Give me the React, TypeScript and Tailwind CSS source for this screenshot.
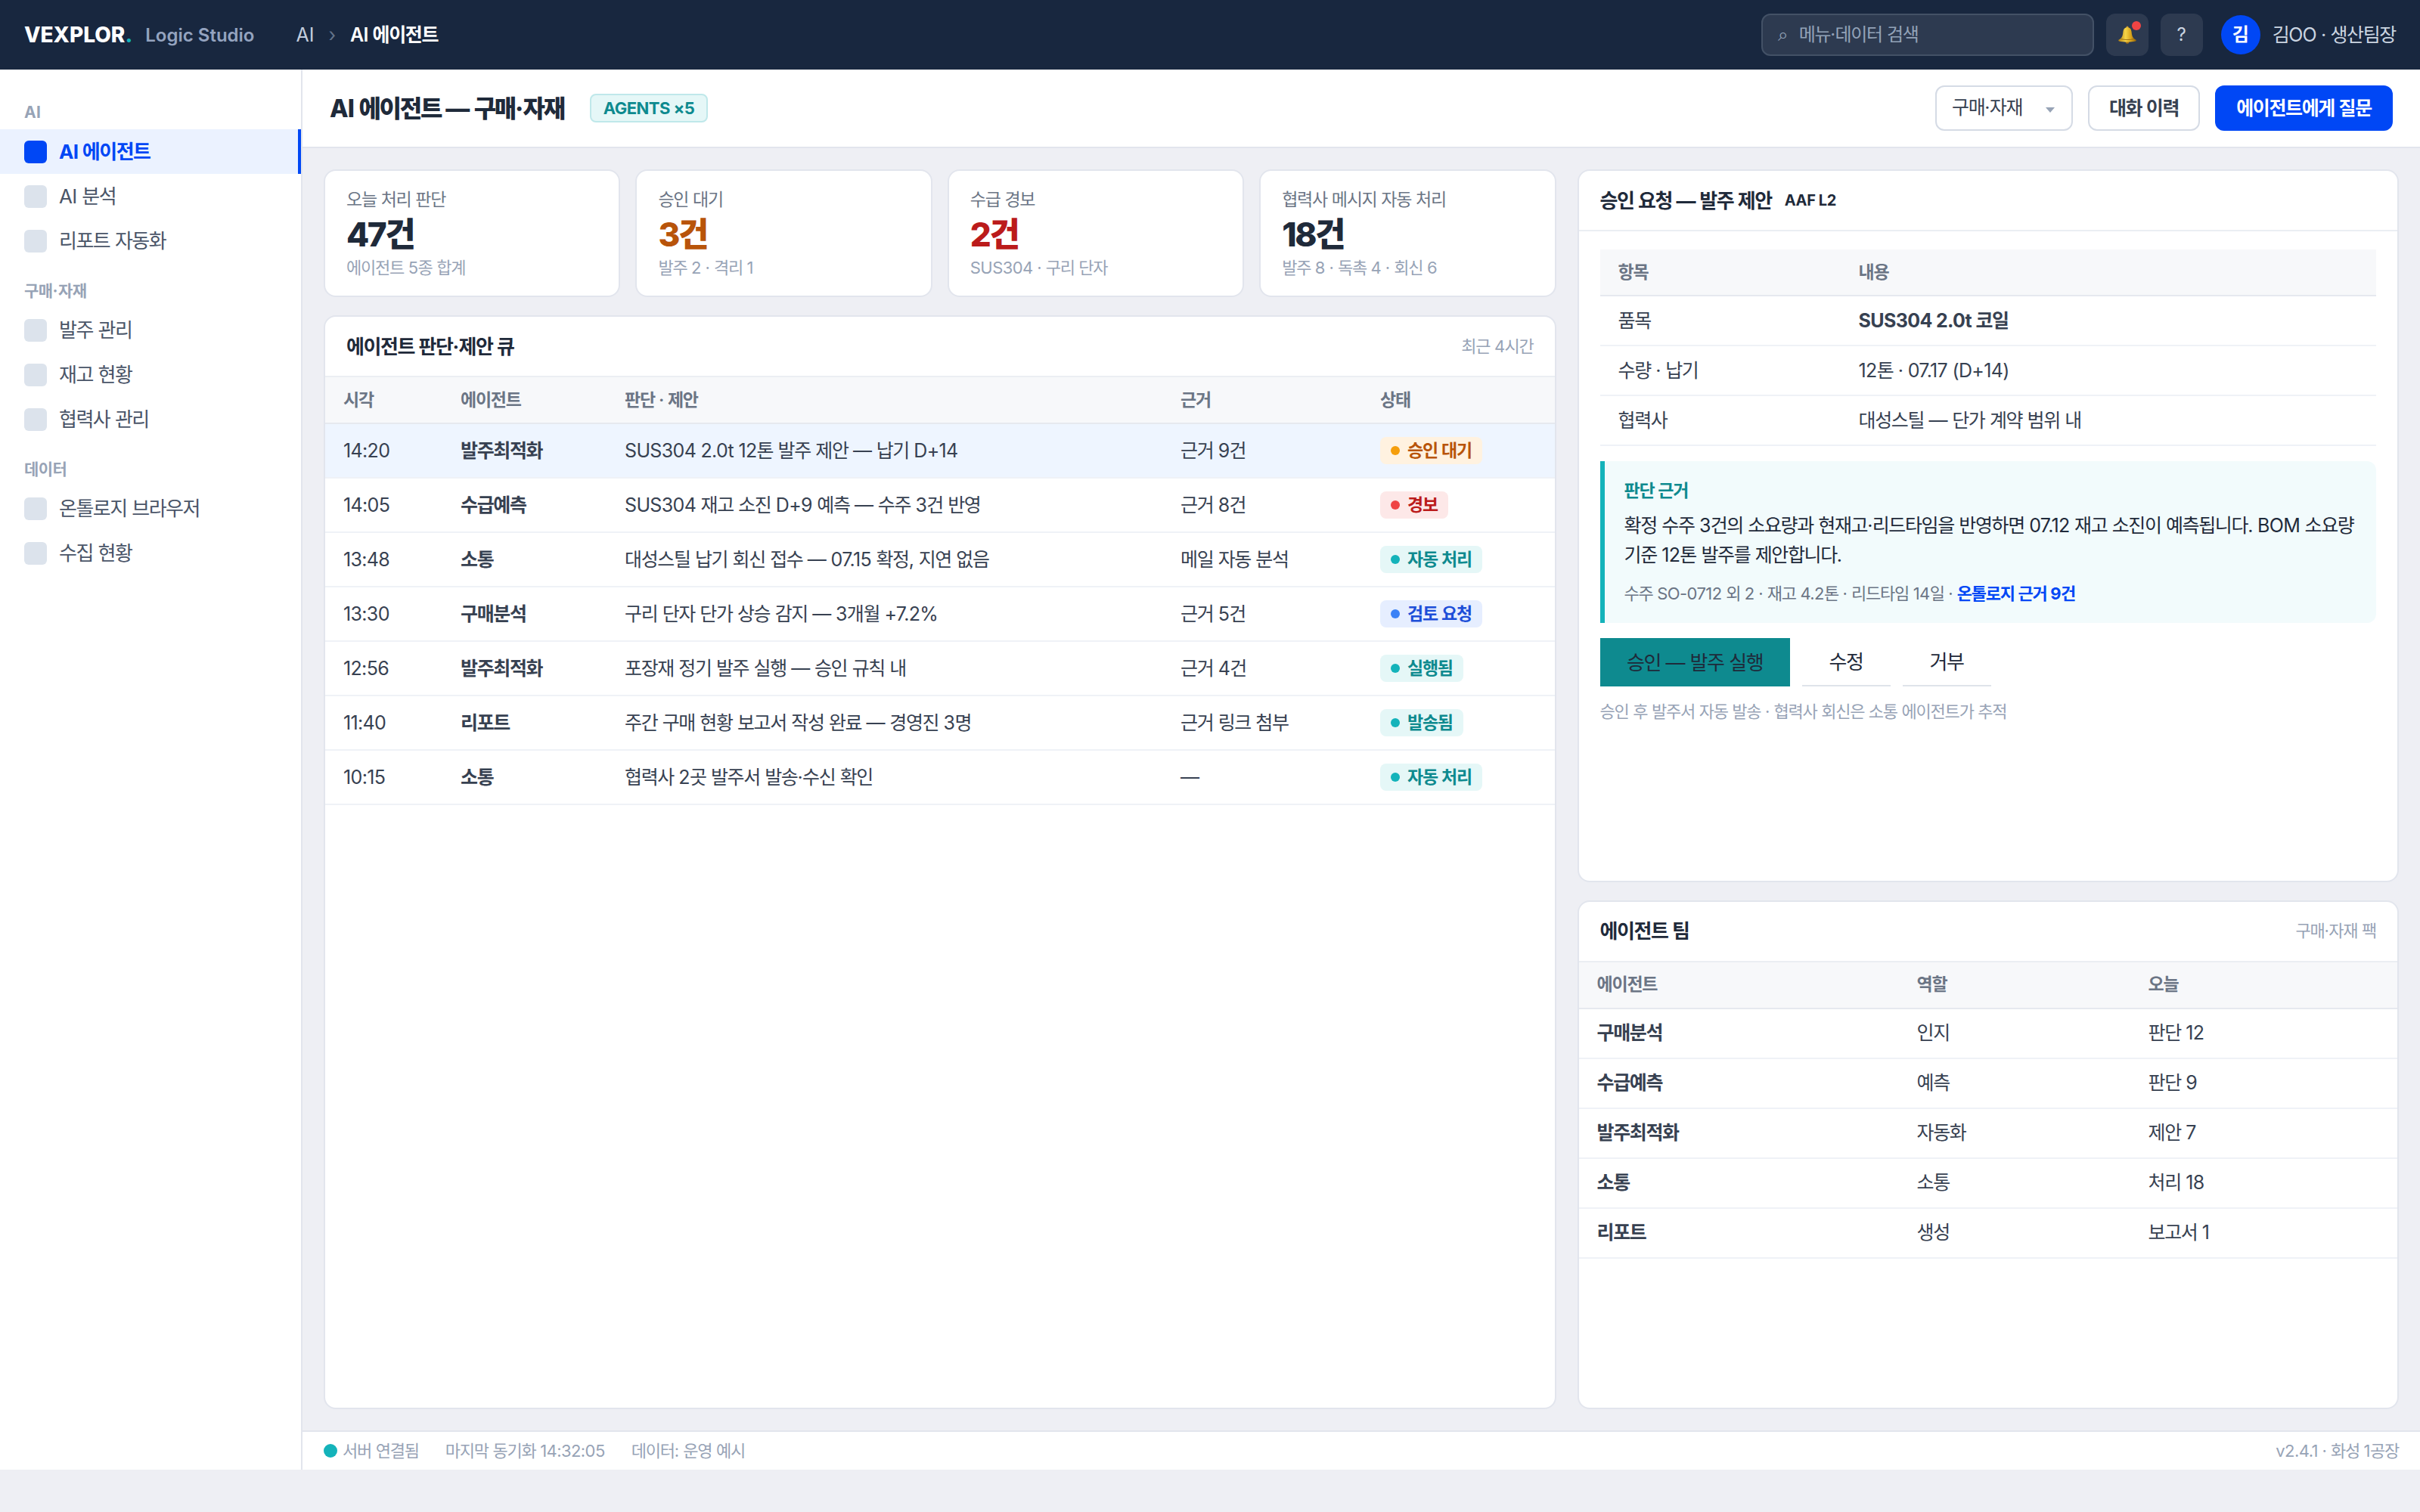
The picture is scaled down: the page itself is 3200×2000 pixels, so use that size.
import React from "react";

type TextProps = {
  children: string;
  hangul?: string;
  latin?: string;
};

type Tone = "amber" | "red" | "teal" | "blue";

type QueueRow = {
  time: string;
  agent: string;
  proposal: string;
  basis: string;
  status: string;
  tone: Tone;
  active?: boolean;
};

const menu = [
  { title: "AI", items: ["AI 에이전트", "AI 분석", "리포트 자동화"] },
  { title: "구매·자재", items: ["발주 관리", "재고 현황", "협력사 관리"] },
  { title: "데이터", items: ["온톨로지 브라우저", "수집 현황"] },
];

const stats = [
  { label: "오늘 처리 판단", value: "47건", note: "에이전트 5종 합계", color: "text-[#1f2a3a]" },
  { label: "승인 대기", value: "3건", note: "발주 2 · 격리 1", color: "text-[#b8540a]" },
  { label: "수급 경보", value: "2건", note: "SUS304 · 구리 단자", color: "text-[#bb1b1b]" },
  { label: "협력사 메시지 자동 처리", value: "18건", note: "발주 8 · 독촉 4 · 회신 6", color: "text-[#1f2a3a]" },
];

const queue: QueueRow[] = [
  { time: "14:20", agent: "발주최적화", proposal: "SUS304 2.0t 12톤 발주 제안 — 납기 D+14", basis: "근거 9건", status: "승인 대기", tone: "amber", active: true },
  { time: "14:05", agent: "수급예측", proposal: "SUS304 재고 소진 D+9 예측 — 수주 3건 반영", basis: "근거 8건", status: "경보", tone: "red" },
  { time: "13:48", agent: "소통", proposal: "대성스틸 납기 회신 접수 — 07.15 확정, 지연 없음", basis: "메일 자동 분석", status: "자동 처리", tone: "teal" },
  { time: "13:30", agent: "구매분석", proposal: "구리 단자 단가 상승 감지 — 3개월 +7.2%", basis: "근거 5건", status: "검토 요청", tone: "blue" },
  { time: "12:56", agent: "발주최적화", proposal: "포장재 정기 발주 실행 — 승인 규칙 내", basis: "근거 4건", status: "실행됨", tone: "teal" },
  { time: "11:40", agent: "리포트", proposal: "주간 구매 현황 보고서 작성 완료 — 경영진 3명", basis: "근거 링크 첨부", status: "발송됨", tone: "teal" },
  { time: "10:15", agent: "소통", proposal: "협력사 2곳 발주서 발송·수신 확인", basis: "—", status: "자동 처리", tone: "teal" },
];

const team = [
  ["구매분석", "인지", "판단 12"],
  ["수급예측", "예측", "판단 9"],
  ["발주최적화", "자동화", "제안 7"],
  ["소통", "소통", "처리 18"],
  ["리포트", "생성", "보고서 1"],
];

const order = [
  ["품목", "SUS304 2.0t 코일"],
  ["수량 · 납기", "12톤 · 07.17 (D+14)"],
  ["협력사", "대성스틸 — 단가 계약 범위 내"],
];

const tones: Record<Tone, { box: string; dot: string }> = {
  amber: { box: "bg-[#fff2e0] text-[#b8540a]", dot: "bg-[#f59e0b]" },
  red: { box: "bg-[#fde8e8] text-[#bb1b1b]", dot: "bg-[#ef4444]" },
  teal: { box: "bg-[#e5f7f7] text-[#0e8a8f]", dot: "bg-[#14b3ba]" },
  blue: { box: "bg-[#e6eeff] text-[#1d4ed8]", dot: "bg-[#3b82f6]" },
};

// Hangul runs are set tighter than the latin text around them
const T = ({
  children,
  hangul = "tracking-[-0.055em]",
  latin = "tracking-[-0.026em]",
}: TextProps) => (
  <>
    {children.split(/([가-힣]+)/).map((part, index) =>
      part ? (
        <span key={index} className={index % 2 ? hangul : latin}>
          {part}
        </span>
      ) : null
    )}
  </>
);

const BellIcon = () => (
  <svg className="h-6 w-6" viewBox="0 0 24 24">
    <defs>
      <linearGradient id="bell" x1="0" x2="1">
        <stop offset="0" stopColor="#b07d10" />
        <stop offset="0.4" stopColor="#f6d548" />
        <stop offset="0.7" stopColor="#d9a51c" />
        <stop offset="1" stopColor="#8f610a" />
      </linearGradient>
    </defs>
    <circle cx="12" cy="2" r="1.5" fill="#c9962a" />
    <circle cx="12" cy="21.5" r="2.3" fill="#a8741a" />
    <path
      d="M12 2.2c3.8 0 5.2 2.600 5.600 6 .5 5 1.400 8.300 5.600 10.300.9.5.7 1.600-.2 1.900-6.500 1.500-15.500 1.500-22 0-.9-.3-1.100-1.400-.2-1.900C5 16.500 5.900 13.200 6.400 8.200c.4-3.400 1.800-6 5.600-6z"
      fill="url(#bell)"
    />
    <path d="M3.500 17.600c5.200 1.300 11.800 1.300 17 0" fill="none" stroke="#8f610a" strokeWidth="0.8" />
  </svg>
);

const Badge = ({ tone, children }: { tone: Tone; children: string }) => (
  <span
    className={`inline-flex h-9 items-center gap-2.5 rounded-lg px-3.5 text-[23px] font-semibold ${tones[tone].box}`}
  >
    <span className={`size-3 rounded-full ${tones[tone].dot}`} />
    <span>
      <T>{children}</T>
    </span>
  </span>
);

const Panel = ({
  title,
  tag,
  meta,
  className = "",
  children,
}: {
  title: string;
  tag?: string;
  meta?: string;
  className?: string;
  children: React.ReactNode;
}) => (
  <section
    className={`flex min-h-0 flex-col overflow-hidden rounded-2xl border-2 border-[#e2e5ed] bg-white ${className}`}
  >
    <div className="flex h-20 shrink-0 items-center border-b-2 border-[#ebeef3] px-7">
      <h2 className="text-[26px] font-bold text-[#1f2a3a]">
        <T>{title}</T>
      </h2>
      {tag && (
        <span className="ml-[17px] text-[20px] font-bold tracking-[-0.02em] text-[#1f2a3a]">{tag}</span>
      )}
      {meta && (
        <span className="ml-auto text-[22px] text-[#97a3b6]">
          <T>{meta}</T>
        </span>
      )}
    </div>
    {children}
  </section>
);

const HeadRow = ({ cells, cols }: { cells: string[]; cols: string }) => (
  <div
    className={`grid h-[62px] items-center border-b-2 border-[#e6e9ef] bg-[#f7f8fa] text-[23px] font-semibold text-[#6b7585] ${cols}`}
  >
    {cells.map((cell) => (
      <span key={cell} className="px-6">
        <T>{cell}</T>
      </span>
    ))}
  </div>
);

const queueCols = "grid-cols-[155px_217px_735px_264px_1fr]";
const teamCols = "grid-cols-[423px_306px_1fr]";
const orderCols = "grid-cols-[318px_1fr]";

const TopBar = () => (
  <header className="flex h-[92px] items-center bg-[#18273f] px-8">
    <div className="text-[28px] font-extrabold text-white">
      VEXPLOR<span className="text-[#14b3ba]">.</span>
    </div>
    <div className="ml-[17px] pt-0.5 text-[24px] font-semibold text-[#94a3bf]">Logic Studio</div>
    <nav className="ml-[55px] flex items-center pt-0.5 text-[25px] text-[#c3cddd]">
      <span>AI</span>
      <span className="mx-[19px] text-[#64748b]">›</span>
      <span className="font-semibold text-white">
        <T>AI 에이전트</T>
      </span>
    </nav>
    <div className="ml-auto flex h-14 w-[440px] items-center rounded-xl border-2 border-[#435166] bg-[#2d3a50] px-5 text-[24px] text-[#94a3b8]">
      <span className="w-[28px]">⌕</span>
      <span>
        <T>메뉴·데이터 검색</T>
      </span>
    </div>
    <div className="relative ml-4 flex size-14 items-center justify-center rounded-xl bg-[#2d3a50]">
      <BellIcon />
      <span className="absolute top-2.5 right-2.5 size-3 rounded-full bg-[#ef4444]" />
    </div>
    <div className="ml-4 flex size-14 items-center justify-center rounded-xl bg-[#2d3a50] text-[24px] text-[#cbd5e1]">
      ?
    </div>
    <div className="ml-6 flex size-[52px] items-center justify-center rounded-full bg-[#0047f5] text-[24px] font-bold text-white">
      김
    </div>
    <div className="ml-4 pt-0.5 text-[25px] text-[#cbd5e1]">
      <T latin="tracking-[-0.035em]">김OO · 생산팀장</T>
    </div>
  </header>
);

const Sidebar = () => (
  <aside className="w-[400px] shrink-0 border-r-2 border-[#e2e5ed] bg-white pt-5">
    {menu.map((group, g) => (
      <div key={group.title}>
        <div className="h-[59px] px-8 pt-6 text-[21px] leading-[25px] font-bold text-[#97a3b6]">
          <T hangul="tracking-[-0.025em]" latin="tracking-[0.02em]">
            {group.title}
          </T>
        </div>
        {group.items.map((item, i) => {
          const active = g === 0 && i === 0;
          return (
            <div
              key={item}
              className={`flex h-[59px] items-center gap-4 pl-8 text-[26px] ${
                active
                  ? "border-r-4 border-[#0047f5] bg-[#ebf2ff] font-bold text-[#0047f5]"
                  : "text-[#4a5568]"
              }`}
            >
              <span className={`size-[30px] rounded-md ${active ? "bg-[#0047f5]" : "bg-[#dce3ec]"}`} />
              <span>
                <T hangul="tracking-[-0.058em]">{item}</T>
              </span>
            </div>
          );
        })}
      </div>
    ))}
  </aside>
);

const TitleBar = () => (
  <div className="flex h-[104px] shrink-0 items-center border-b-2 border-[#e2e5ed] bg-white px-9">
    <h1 className="pt-0.5 text-[32px] font-extrabold text-[#1f2a3a]">
      <T hangul="tracking-[-0.072em]" latin="tracking-[-0.024em]">
        AI 에이전트 — 구매·자재
      </T>
    </h1>
    <span className="ml-[34px] flex h-[38px] items-center rounded-lg border-2 border-[#bfe8ea] bg-[#e5f7f7] px-4 text-[22px] font-bold tracking-[-0.025em] text-[#0e8a8f]">
      AGENTS ×5
    </span>
    <div className="ml-auto flex gap-5 text-[25px] text-[#374151]">
      <div className="flex h-[60px] w-[182px] items-center justify-between rounded-xl border-2 border-[#d5dbe5] bg-white px-5">
        <span>
          <T>구매·자재</T>
        </span>
        <svg className="mt-1 mr-0.5 h-[7px] w-3 fill-[#97a3b6]" viewBox="0 0 12 7">
          <path d="M0 0h12L6 7z" />
        </svg>
      </div>
      <button className="h-[60px] w-[148px] rounded-xl border-2 border-[#d5dbe5] bg-white pt-0.5 font-semibold">
        <T>대화 이력</T>
      </button>
      <button className="h-[60px] w-[235px] rounded-xl bg-[#0047f5] pt-0.5 font-semibold text-white">
        <T>에이전트에게 질문</T>
      </button>
    </div>
  </div>
);

const StatCards = () => (
  <div className="grid grid-cols-4 gap-5">
    {stats.map((stat) => (
      <div
        key={stat.label}
        className="h-[169px] rounded-2xl border-2 border-[#e2e5ed] bg-white px-7 pt-[21px] leading-[34px]"
      >
        <div className="text-[23px] text-[#6b7585]">
          <T>{stat.label}</T>
        </div>
        <div className={`pt-0.5 text-[44px] leading-[54px] font-extrabold ${stat.color}`}>
          <T latin="tracking-[-0.055em]">{stat.value}</T>
        </div>
        <div className="text-[22px] text-[#97a3b6]">
          <T>{stat.note}</T>
        </div>
      </div>
    ))}
  </div>
);

const QueuePanel = () => (
  <Panel title="에이전트 판단·제안 큐" meta="최근 4시간" className="flex-1">
    <HeadRow cells={["시각", "에이전트", "판단 · 제안", "근거", "상태"]} cols={queueCols} />
    {queue.map((row) => (
      <div
        key={row.time}
        className={`grid h-[72px] items-center border-b-2 border-[#eff2f7] text-[25px] text-[#374151] ${queueCols} ${
          row.active ? "bg-[#eef5ff]" : ""
        }`}
      >
        <span className="px-6 pt-0.5">
          <T>{row.time}</T>
        </span>
        <span className="px-6 pt-0.5 font-bold">
          <T>{row.agent}</T>
        </span>
        <span className="px-6 pt-0.5">
          <T>{row.proposal}</T>
        </span>
        <span className="px-6 pt-0.5">
          <T>{row.basis}</T>
        </span>
        <span className="flex px-6">
          <Badge tone={row.tone}>{row.status}</Badge>
        </span>
      </div>
    ))}
  </Panel>
);

const ApprovalPanel = () => (
  <Panel title="승인 요청 — 발주 제안" tag="AAF L2">
    <div className="px-7 py-6">
      <HeadRow cells={["항목", "내용"]} cols={orderCols} />
      {order.map(([key, value], i) => (
        <div
          key={key}
          className={`grid h-[66px] items-center border-b-2 border-[#eff2f7] text-[25px] text-[#374151] ${orderCols}`}
        >
          <span className="px-6 pt-0.5">
            <T>{key}</T>
          </span>
          <span className={`px-6 pt-0.5 ${i === 0 ? "font-bold" : ""}`}>
            <T>{value}</T>
          </span>
        </div>
      ))}
      <div className="mt-5 rounded-r-xl border-l-6 border-[#14b3ba] bg-[#f2fbfc] px-[26px] py-[22px] whitespace-nowrap">
        <div className="text-[23px] leading-[34px] font-bold text-[#0e8a8f]">
          <T>판단 근거</T>
        </div>
        <p className="mt-2.5 h-[78px] text-[25px] leading-[39px] text-[#1f2a3a]">
          <T>확정 수주 3건의 소요량과 현재고·리드타임을 반영하면 07.12 재고 소진이 예측됩니다. BOM 소요량</T>
          <br />
          <T>기준 12톤 발주를 제안합니다.</T>
        </p>
        <div className="mt-3.5 h-[34px] text-[22px] leading-[34px] text-[#6b7585]">
          <T>수주 SO-0712 외 2 · 재고 4.2톤 · 리드타임 14일 · </T>
          <span className="font-bold text-[#0047f5]">
            <T>온톨로지 근거 9건</T>
          </span>
        </div>
      </div>
      <div className="mt-5 flex gap-4 text-[26px] text-[#1f2a3a]">
        <button className="h-16 w-[251px] bg-[#0e8a8f]">
          <T>승인 — 발주 실행</T>
        </button>
        <button className="h-16 w-[117px] border-b-2 border-[#dfe3ea]">
          <T>수정</T>
        </button>
        <button className="h-16 w-[117px] border-b-2 border-[#dfe3ea]">
          <T>거부</T>
        </button>
      </div>
      <div className="mt-4 text-[22px] leading-[34px] text-[#97a3b6]">
        <T>승인 후 발주서 자동 발송 · 협력사 회신은 소통 에이전트가 추적</T>
      </div>
    </div>
  </Panel>
);

const TeamPanel = () => (
  <Panel title="에이전트 팀" meta="구매·자재 팩">
    <HeadRow cells={["에이전트", "역할", "오늘"]} cols={teamCols} />
    {team.map(([name, role, today]) => (
      <div
        key={name}
        className={`grid h-[66px] items-center border-b-2 border-[#eff2f7] text-[25px] text-[#374151] ${teamCols}`}
      >
        <span className="px-6 font-bold">
          <T>{name}</T>
        </span>
        <span className="px-6">
          <T>{role}</T>
        </span>
        <span className="px-6">
          <T>{today}</T>
        </span>
      </div>
    ))}
  </Panel>
);

const StatusBar = () => (
  <footer className="flex h-[52px] shrink-0 items-center gap-[35px] border-t-2 border-[#e2e5ed] bg-white px-7 text-[22px] text-[#97a3b6]">
    <span className="flex items-center gap-[7px]">
      <span className="size-[18px] rounded-full bg-[#14b3ba]" />
      <span>
        <T>서버 연결됨</T>
      </span>
    </span>
    <span>
      <T>마지막 동기화 14:32:05</T>
    </span>
    <span>
      <T>데이터: 운영 예시</T>
    </span>
    <span className="ml-auto">
      <T>v2.4.1 · 화성 1공장</T>
    </span>
  </footer>
);

const App = () => {
  return (
    <div className="min-h-screen bg-[#eeeff4] font-[Inter,'Noto_Sans_CJK_KR',sans-serif] leading-normal">
      <TopBar />
      <div className="flex h-[1852px]">
        <Sidebar />
        <div className="flex min-w-0 flex-1 flex-col">
          <TitleBar />
          <main className="grid min-h-0 flex-1 grid-cols-[1.5fr_1fr] gap-7 p-7">
            <div className="flex min-h-0 min-w-0 flex-col gap-6">
              <StatCards />
              <QueuePanel />
            </div>
            <div className="grid min-h-0 min-w-0 grid-rows-[1.4fr_1fr] gap-6">
              <ApprovalPanel />
              <TeamPanel />
            </div>
          </main>
          <StatusBar />
        </div>
      </div>
    </div>
  );
};

export default App;
